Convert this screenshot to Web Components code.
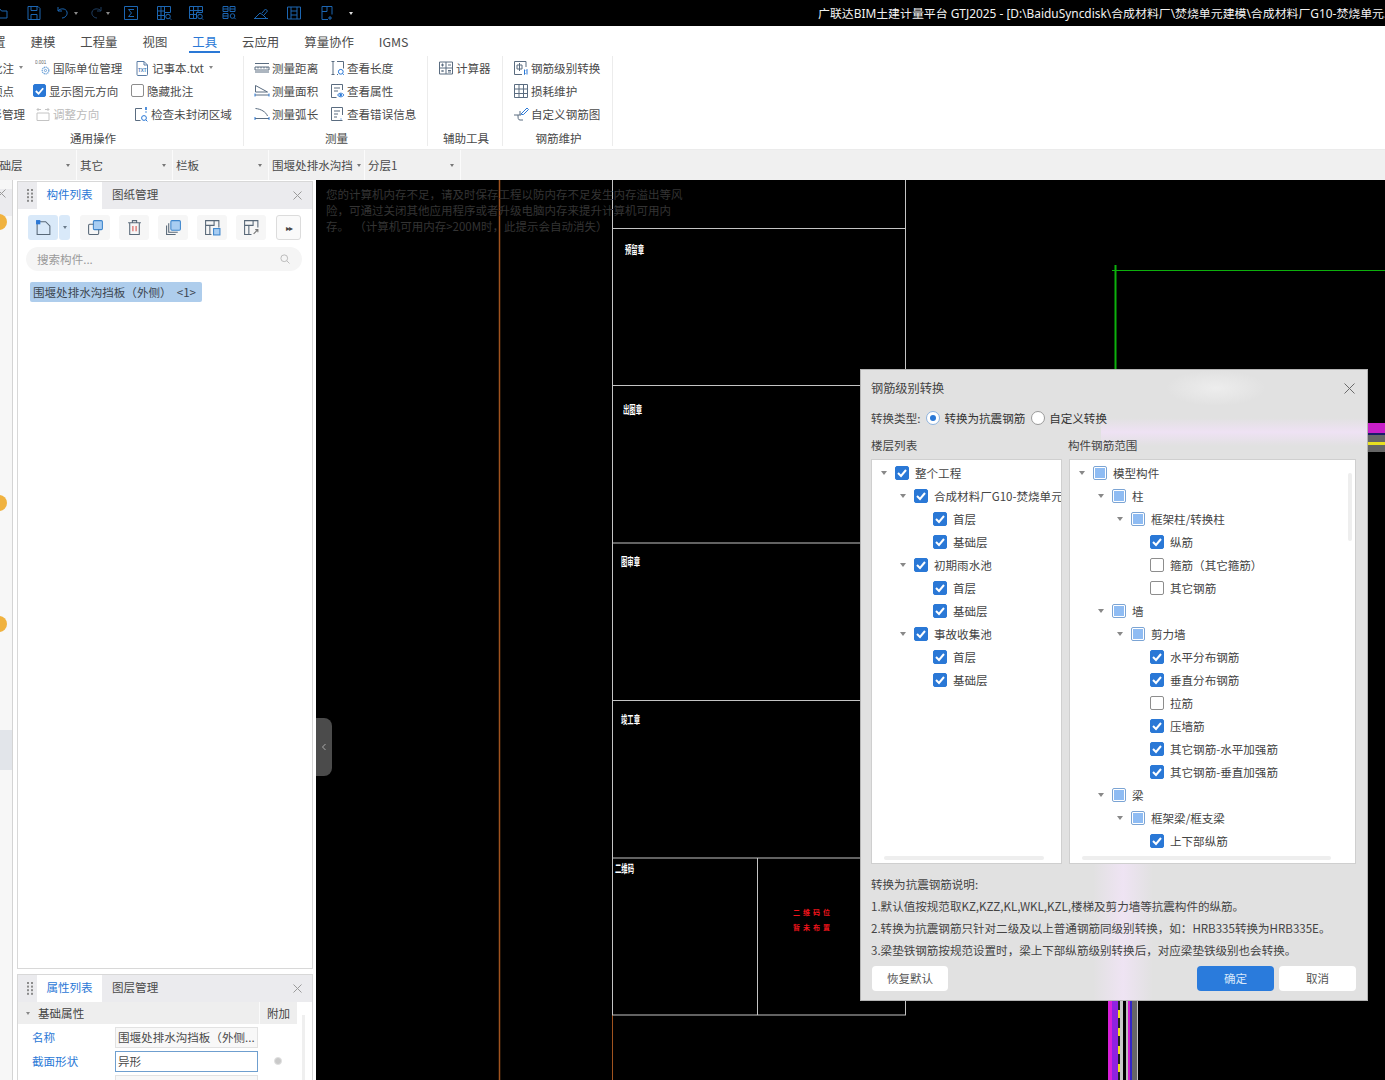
<!DOCTYPE html>
<html lang="zh">
<head>
<meta charset="utf-8">
<title>GTJ2025</title>
<style>
  html, body { margin: 0; height: 100%; overflow: hidden; background: #fff; }
  body {
    width: 1385px; height: 1080px;
    display: flex; flex-direction: column;
    font: 11.55px/16px "Noto Sans CJK SC", "Noto Sans", sans-serif;
    color: #444;
  }
</style>
</head>
<body>
<title-bar>广联达BIM土建计量平台 GTJ2025 - [D:\BaiduSyncdisk\合成材料厂\焚烧单元建模\合成材料厂G10-焚烧单元.GTJ]</title-bar>
<menu-bar></menu-bar>
<ribbon-bar></ribbon-bar>
<selector-bar></selector-bar>
<main-area></main-area>

<script>
const ICONS = {
  folder: '<path d="M1 4h5l1.500 2H13v7H1zM3 6l-2 7"/>',
  save: '<path d="M2 1.500h10l2 2v11H2zM5 1.500v4h6v-4M5 14.500v-5h6v5"/>',
  undo: '<path d="M3 2v4h4M3 6c2-3 8-3 9 1 .8 3-2 6-5 6"/>',
  redo: '<path d="M13 2v4H9M13 6c-2-3-8-3-9 1-.8 3 2 6 5 6"/>',
  sigma: '<path d="M1.500 1.500h13v13h-13zM11 4.500H5.500L8.500 8l-3 3.500H11"/>',
  cells: '<path d="M1.500 1.500h13v6h-6v7h-7zM1.500 6h7M5 1.500v13M8.500 1.500v6M1.500 10.500h7"/><circle cx="12" cy="11.500" r="2.300"/><path d="M13.700 13.200l1.500 1.500"/>',
  grid: '<path d="M1.500 1.500h13v6h-6v6h-7zM1.500 5.500h13M5.500 1.500v12M10 1.500v6M1.500 9.500h7"/><circle cx="12" cy="11.500" r="2.300"/><path d="M13.700 13.200l1.500 1.500"/>',
  blocks: '<path d="M2 1.500h5v5H2zM9 1.500h5v5H9zM2 8.500h5v5H2zM2 4h5M9 4h5M2 11h5"/><circle cx="11.500" cy="11" r="2.300"/><path d="M13.200 12.700l1.500 1.500"/>',
  pen: '<path d="M1 13.500h14M2 13l5-5 3 2 3 3M9 8l3.500-4 2 2-3.500 4"/>',
  film: '<path d="M1.500 2v12M14.500 2v12M5 2v12M11 2v12M1.500 2h13M1.500 14h13M5 6h6M5 10h6"/>',
  sheet: '<path d="M3 1.500h10v8M3 1.500v13h6M8 1.500v5H3M11 11v4M9 13h4"/>',
  unit: '<text x="0" y="4" font-size="4.500" font-family="Liberation Sans" fill="#666" stroke="none">0.001</text><circle cx="10.500" cy="10.500" r="3.300" stroke="#6fa3d8" stroke-width="1.300" stroke-dasharray="1.300 .6"/><circle cx="10.500" cy="10.500" r="1.100" stroke="#6fa3d8"/>',
  note: '<path d="M3 1.500h7l3.500 3.500v9.500a1 1 0 0 1-1 1H4a1 1 0 0 1-1-1zM10 1.500V5h3.500" stroke="#5a7ca5"/><text x="4" y="12" font-size="4.500" font-family="Liberation Sans" font-weight="700" fill="#3f78b5" stroke="none">TXT</text>',
  direction: '<path d="M2 7h12v7.500H2z"/><path d="M2 3.500h4M10 3.500h4M12.500 2L14 3.500 12.500 5M3.500 2L2 3.500 3.500 5"/>',
  region: '<path d="M9 2.500H2.500v12h5" /><path d="M13 1v3M13 5.500v1" stroke="#2a78d6" stroke-width="1.600"/><circle cx="11" cy="12" r="2.400" stroke="#2a78d6"/><path d="M12.800 13.800l1.600 1.600" stroke="#2a78d6"/>',
  distance: '<path d="M1 3.500h14M1 12h14M1 7h14v3H1zM4 7v1.500M7 7v1.500M10 7v1.500M13 7v1.500"/>',
  area: '<path d="M1.500 9V2.500l12 6.500h-12M1 12h14" /><path d="M1 10.500v3M15 10.500v3" stroke="#2a78d6"/>',
  arc: '<path d="M1.500 2.500C7 3 12 6 13.500 10M1 12.500h14"/><path d="M1 11v3M15 11v3" stroke="#2a78d6"/>',
  length: '<path d="M2.500 1.500h3M2.500 14.500h3M4 1.500v13M8 1.500h6.500v7M8 14.500h1"/><circle cx="11.800" cy="11.800" r="2.400" stroke="#2a78d6"/><path d="M13.500 13.500l1.300 1.300" stroke="#2a78d6"/>',
  props: '<path d="M13.500 7V1.500h-11v13h5M5 5h6M5 8h4"/><path d="M8.500 12c1.800-2.400 4.700-2.400 6.500 0-1.800 2.400-4.700 2.400-6.500 0z" stroke="#2a78d6"/><circle cx="11.700" cy="12" r=".9" fill="#2a78d6" stroke="#2a78d6"/>',
  errors: '<path d="M13.500 9V1.500h-11v13h11M5 5h6M5 8h4M5 11h3"/><path d="M12 10.500v.1M12 12.500v1" stroke="#2a78d6"/>',
  calc: '<path d="M1.500 2h13v12h-13zM8 2v12M1.500 8h13M3 5h3M4.500 3.500v3M10 5h3M3.500 10l2 2M5.500 10l-2 2M10 10.500h3M10 12h3"/>',
  convert: '<path d="M13 7V1.500H1.500v13H9"/><path d="M4 5h5v4H4zM6.500 3v8" stroke="#5a6c80"/><path d="M11.500 14.500V9.500M14 9.500v5M14 9.500l-1 1M11.500 14.500l1-1" stroke="#2a78d6"/>',
  table: '<path d="M1.500 1.500h13v13h-13zM1.500 6h13M1.500 10.500h13M6 1.500v13M10.500 1.500v13" />',
  custom: '<path d="M1 9h7M5 9c0 3 0 5 2 5h3M7 9V5" /><path d="M8 8l1 -1 5-5 1.500 1.500-5 5-1.500 0z" stroke="#2a78d6"/>',
  newfile: '<path d="M2 2.500h8l4 4v8H2z"/><rect x="1" y="1" width="4" height="4" fill="#2a78d6" stroke="none"/>',
  copy: '<rect x="6" y="1.500" width="8.500" height="8.500" rx="1" fill="#a8cdf2" stroke="#3f86cc"/><path d="M6 5H2.500a1 1 0 0 0-1 1v7.500a1 1 0 0 0 1 1H10a1 1 0 0 0 1-1V10"/>',
  trash: '<path d="M2 3.500h12M6 3.500V1.500h4v2M3.500 3.500v11h9v-11"/><path d="M6.500 6.500v5M9.500 6.500v5" stroke="#d9534f"/>',
  layers: '<rect x="5.500" y="1.500" width="9" height="9" rx="1" fill="#a8cdf2" stroke="#3f86cc"/><path d="M3.500 4v8.500H12M1.500 6v8.500H10"/>',
  saveitem: '<path d="M14 8V1.500H1.500v13H7M1.500 6h8v-4.500M5.500 6v8.500"/><rect x="9" y="9" width="6" height="6" fill="#a8cdf2" stroke="#3f86cc"/>',
  saveout: '<path d="M14 8V1.500H1.500v13H8M1.500 6h8v-4.500M5.500 6v8.500"/><path d="M10 14l4-4M11.500 10H14v2.500" stroke="#777"/>',
  search: '<circle cx="7" cy="7" r="4.500"/><path d="M10.500 10.500l3.500 3.500"/>'
};

// small helper so every element below is just a tag name + shadow markup
function define(tag, html, init) {
  const template = document.createElement('template');
  template.innerHTML = html;
  customElements.define(tag, class extends HTMLElement {
    constructor() {
      super();
      this.attachShadow({ mode: 'open' });
      this.shadowRoot.appendChild(template.content.cloneNode(true));
    }
    connectedCallback() {
      if (init) init(this);
    }
  });
}

define('ui-icon', `
  <style>
    :host { display: inline-flex; flex: none; width: 16px; height: 16px; color: #5a6c80; }
    svg { width: 100%; height: 100%; fill: none; stroke: currentColor; stroke-width: 1; }
  </style>
  <svg viewBox="0 0 16 16"></svg>
`, el => {
  el.shadowRoot.querySelector('svg').innerHTML = ICONS[el.getAttribute('name')] || '';
});

define('ui-check', `
  <style>
    :host {
      display: inline-flex; flex: none; box-sizing: border-box; width: 14px; height: 14px;
      border: 1px solid #8d8d8d; border-radius: 2px; background: #fff;
      align-items: center; justify-content: center;
    }
    :host([state="checked"]) { background: #2a78d6; border-color: #2a78d6; }
    :host([state="mixed"]) { background: #fff; border-color: #7ba4d4; }
    svg { display: none; width: 12px; height: 12px; fill: none; stroke: #fff; stroke-width: 2; }
    :host([state="checked"]) svg { display: block; }
    i { display: none; width: 10px; height: 10px; background: #8fbcf3; }
    :host([state="mixed"]) i { display: block; }
  </style>
  <svg viewBox="0 0 12 12"><path d="M2 6l3 3 5-6"/></svg><i></i>
`);

define('title-bar', `
  <style>
    :host {
      display: flex; flex: none; height: 26px; background: #000; overflow: hidden;
      align-items: center; position: relative; color: #fff;
    }
    ui-icon { color: #1c66b2; position: absolute; top: 5px; }
    .tri { position: absolute; top: 12px; width: 0; height: 0;
      border: 2.500px solid transparent; border-top: 3px solid #8a8a8a; border-bottom: 0; }
    .title {
      margin-left: 818px; white-space: nowrap; font: 11.9px/16px "Noto Sans", "Noto Sans CJK SC", sans-serif; color: #f2f2f2;
    }
  </style>
  <ui-icon name="folder" style="left:-6px"></ui-icon>
  <ui-icon name="save" style="left:26px"></ui-icon>
  <ui-icon name="undo" style="left:55px"></ui-icon><span class="tri" style="left:74px"></span>
  <ui-icon name="redo" style="left:88px;color:#1f3f63"></ui-icon><span class="tri" style="left:106px"></span>
  <ui-icon name="sigma" style="left:123px"></ui-icon>
  <ui-icon name="cells" style="left:156px"></ui-icon>
  <ui-icon name="grid" style="left:188px"></ui-icon>
  <ui-icon name="blocks" style="left:221px"></ui-icon>
  <ui-icon name="pen" style="left:253px"></ui-icon>
  <ui-icon name="film" style="left:286px"></ui-icon>
  <ui-icon name="sheet" style="left:319px"></ui-icon>
  <span class="tri" style="left:349px;border-top-color:#ddd"></span>
  <span class="title"><slot></slot></span>
`);

define('menu-bar', `
  <style>
    :host {
      display: flex; flex: none; height: 28px; box-sizing: border-box; background: #fff; gap: 25px; overflow: hidden;
      padding-top: 2px; font-size: 12.4px; line-height: 28px; color: #4c4c4c;
    }
    span { position: relative; flex: none; height: 26px; }
    span:first-of-type { margin-left: -44px; }
    .on { color: #2a78d6; }
    .on::after {
      content: ""; position: absolute; left: -3px; right: -3px; bottom: 1px;
      height: 2px; background: #2a78d6;
    }
  </style>
  <span>工程设置</span><span>建模</span><span>工程量</span><span>视图</span>
  <span class="on">工具</span><span>云应用</span><span>算量协作</span><span>IGMS</span>
`);

define('ribbon-item', `
  <style>
    :host {
      display: flex; align-items: center; height: 23px; gap: 2px; white-space: nowrap;
      color: #4a4a4a;
    }
    :host([disabled]) { color: #bbb; }
    .arrow { width: 0; height: 0; margin-left: 3px; border: 2.500px solid transparent;
      border-top: 3px solid #888; border-bottom: 0; }
    :host(:not([drop])) .arrow { display: none; }
  </style>
  <slot name="lead"></slot><slot></slot><span class="arrow"></span>
`);

define('ribbon-group', `
  <style>
    :host {
      display: flex; flex-direction: column; flex: none; box-sizing: border-box;
      height: 90px; margin-top: 2px;
      border-right: 1px solid #ececec; overflow: hidden;
    }
    .cols { display: flex; height: 69px; }
    .name { height: 21px; line-height: 26px; text-align: center; color: #4a4a4a; white-space: nowrap; margin-left: var(--name-left, 0); padding-right: var(--name-right, 0); }
  </style>
  <div class="cols"><slot></slot></div>
  <div class="name"></div>
`, el => {
  el.shadowRoot.querySelector('.name').textContent = el.getAttribute('name');
});

define('ribbon-bar', `
  <style>
    :host {
      display: flex; flex: none; height: 96px; background: #fff; overflow: hidden;
      box-sizing: border-box; border-bottom: 1px solid #ebebeb;
    }
    .col { display: flex; flex-direction: column; flex: none; }
    ui-icon[name="direction"] { color: #c4c4c4; }
    ui-check { width: 13px; height: 13px; margin-right: 1px; }
  </style>
  <ribbon-group name="通用操作" style="width:244px;--name-right:57px">
    <div class="col" style="width:33px;align-items:flex-end">
      <ribbon-item drop style="padding-right:10px">批注</ribbon-item>
      <ribbon-item style="padding-right:19px">顶点</ribbon-item>
      <ribbon-item style="padding-right:8px">图形管理</ribbon-item>
    </div>
    <div class="col" style="width:98px">
      <ribbon-item style="padding-left:2px"><ui-icon slot="lead" name="unit"></ui-icon>国际单位管理</ribbon-item>
      <ribbon-item><ui-check slot="lead" state="checked"></ui-check>显示图元方向</ribbon-item>
      <ribbon-item disabled style="padding-left:2px"><ui-icon slot="lead" name="direction"></ui-icon>调整方向</ribbon-item>
    </div>
    <div class="col">
      <ribbon-item drop style="padding-left:3px"><ui-icon slot="lead" name="note"></ui-icon>记事本.txt</ribbon-item>
      <ribbon-item><ui-check slot="lead"></ui-check>隐藏批注</ribbon-item>
      <ribbon-item style="padding-left:2px"><ui-icon slot="lead" name="region"></ui-icon>检查未封闭区域</ribbon-item>
    </div>
  </ribbon-group>
  <ribbon-group name="测量" style="width:184px;padding-left:10px;--name-left:-8px">
    <div class="col" style="width:75px">
      <ribbon-item><ui-icon slot="lead" name="distance"></ui-icon>测量距离</ribbon-item>
      <ribbon-item><ui-icon slot="lead" name="area"></ui-icon>测量面积</ribbon-item>
      <ribbon-item><ui-icon slot="lead" name="arc"></ui-icon>测量弧长</ribbon-item>
    </div>
    <div class="col">
      <ribbon-item><ui-icon slot="lead" name="length"></ui-icon>查看长度</ribbon-item>
      <ribbon-item><ui-icon slot="lead" name="props"></ui-icon>查看属性</ribbon-item>
      <ribbon-item><ui-icon slot="lead" name="errors"></ui-icon>查看错误信息</ribbon-item>
    </div>
  </ribbon-group>
  <ribbon-group name="辅助工具" style="width:75px;padding-left:10px;--name-left:-8px">
    <div class="col">
      <ribbon-item><ui-icon slot="lead" name="calc"></ui-icon>计算器</ribbon-item>
    </div>
  </ribbon-group>
  <ribbon-group name="钢筋维护" style="width:110px;padding-left:10px;--name-left:-8px">
    <div class="col">
      <ribbon-item><ui-icon slot="lead" name="convert"></ui-icon>钢筋级别转换</ribbon-item>
      <ribbon-item><ui-icon slot="lead" name="table"></ui-icon>损耗维护</ribbon-item>
      <ribbon-item><ui-icon slot="lead" name="custom"></ui-icon>自定义钢筋图</ribbon-item>
    </div>
  </ribbon-group>
`);

define('selector-cell', `
  <style>
    :host {
      display: flex; flex: none; box-sizing: border-box; width: 96px; height: 30px;
      align-items: center; justify-content: space-between; padding: 0 6px 0 3px;
      border-right: 1px solid #fbfbfb; white-space: nowrap; color: #4a4a4a;
    }
    i { flex: none; width: 0; height: 0; border: 2.500px solid transparent;
      border-top: 3px solid #777; border-bottom: 0; }
  </style>
  <span><slot></slot></span><i></i>
`);

define('selector-bar', `
  <style>
    :host { display: flex; flex: none; height: 30px; background: #f0f0f0; overflow: hidden; }
  </style>
  <selector-cell style="width:92px;margin-left:-15px">基础层</selector-cell>
  <selector-cell>其它</selector-cell>
  <selector-cell>栏板</selector-cell>
  <selector-cell style="padding-right:3px">围堰处排水沟挡</selector-cell>
  <selector-cell>分层1</selector-cell>
`);

define('panel-tabs', `
  <style>
    :host {
      display: flex; flex: none; height: 27px; background: #ebebee; position: relative;
      line-height: 25px; color: #4a4a4a;
    }
    .grip { width: 19px; flex: none; box-sizing: border-box; padding-left: 5px; display: flex; align-items: center; justify-content: center; }
    .grip svg { width: 6px; height: 13px; fill: #8b8b8b; }
    .on { width: 65px; text-align: center; background: #fff; color: #2a78d6; flex: none; }
    .off { margin-left: 10px; }
    .x { margin-left: auto; width: 30px; display: flex; align-items: center; justify-content: center; }
    .x svg { width: 9px; height: 9px; stroke: #9a9a9a; fill: none; }
  </style>
  <div class="grip"><svg viewBox="0 0 6 13"><rect width="2" height="2"/><rect x="4" width="2" height="2"/><rect y="3.600" width="2" height="2"/><rect x="4" y="3.600" width="2" height="2"/><rect y="7.200" width="2" height="2"/><rect x="4" y="7.200" width="2" height="2"/><rect y="10.800" width="2" height="2"/><rect x="4" y="10.800" width="2" height="2"/></svg></div>
  <div class="on"><slot name="active"></slot></div>
  <div class="off"><slot name="other"></slot></div>
  <div class="x"><svg viewBox="0 0 9 9"><path d="M.5.5l8 8M8.500.5l-8 8"/></svg></div>
`);

define('tool-btn', `
  <style>
    :host {
      display: flex; flex: none; box-sizing: border-box; width: 30px; height: 25px;
      background: #f6f6f6; border-radius: 3px; align-items: center; justify-content: center;
    }
  </style>
  <slot></slot>
`);

define('list-panel', `
  <style>
    :host {
      display: flex; flex-direction: column; flex: 1; min-height: 0; box-sizing: border-box;
      border: 1px solid #d8d8d8; background: #fff;
    }
    .tools { display: flex; gap: 9px; padding: 6px 0 0 10px; }
    .split { display: flex; gap: 1px; margin-right: 1px; }
    .split tool-btn { background: #d9e9f9; }
    .caret { width: 11px; }
    .caret i { width: 0; height: 0; border: 2.500px solid transparent; border-top: 3px solid #6a7a8a; border-bottom: 0; }
    .more { width: 25px; margin-left: 1px; background: #fafafa; border: 1px solid #dcdcdc; font-size: 8px; color: #444; letter-spacing: -1px; }
    tool-btn ui-icon { color: #586878; width: 17px; height: 17px; }
    .search {
      display: flex; align-items: center; justify-content: space-between; box-sizing: border-box;
      margin: 7px 10px 0 8px; height: 24px; padding: 0 11px; border-radius: 12px;
      background: #f5f5f5; color: #9a9a9a;
    }
    .search ui-icon { width: 12px; height: 12px; color: #aaa; }
    .item {
      align-self: flex-start; margin: 11px 0 0 12px; height: 20px; line-height: 20px;
      padding: 0 3px; width: 172px; box-sizing: border-box; border-radius: 2px;
      background: #aecdec; color: #3c4650; white-space: pre;
    }
  </style>
  <panel-tabs><span slot="active">构件列表</span><span slot="other">图纸管理</span></panel-tabs>
  <div class="tools">
    <div class="split">
      <tool-btn><ui-icon name="newfile"></ui-icon></tool-btn>
      <tool-btn class="caret"><i></i></tool-btn>
    </div>
    <tool-btn><ui-icon name="copy"></ui-icon></tool-btn>
    <tool-btn><ui-icon name="trash"></ui-icon></tool-btn>
    <tool-btn><ui-icon name="layers"></ui-icon></tool-btn>
    <tool-btn><ui-icon name="saveitem"></ui-icon></tool-btn>
    <tool-btn><ui-icon name="saveout"></ui-icon></tool-btn>
    <tool-btn class="more">▸▸</tool-btn>
  </div>
  <div class="search"><span>搜索构件...</span><ui-icon name="search"></ui-icon></div>
  <div class="item">围堰处排水沟挡板（外侧）  &lt;1&gt;</div>
`);

define('prop-row', `
  <style>
    :host { display: flex; align-items: center; height: 24px; padding-left: 14px; flex: none; }
    .k { width: 83px; color: #2a78d6; flex: none; }
    .v {
      box-sizing: border-box; width: 143px; height: 21px; line-height: 19px; padding: 0 2px;
      border: 1px solid #e2e2e2; background: #f8f8f8; color: #4a4a4a;
      white-space: nowrap; overflow: hidden; flex: none;
    }
    :host([focused]) .v { background: #fff; border-color: #6f9fcf; }
    .dot { width: 8px; height: 8px; margin-left: 16px; border-radius: 50%; background: #c9c9c9; border: 1px solid #e0e0e0; box-sizing: border-box; display: none; }
    :host([focused]) .dot { display: block; }
  </style>
  <span class="k"><slot name="k"></slot></span>
  <span class="v"><slot></slot></span><i class="dot"></i>
`);

define('prop-panel', `
  <style>
    :host {
      display: flex; flex-direction: column; flex: none; height: 106px; box-sizing: border-box;
      border: 1px solid #d8d8d8; border-bottom: 0; background: #fff; overflow: hidden; position: relative;
    }
    .head {
      display: flex; flex: none; height: 22px; width: 279px; line-height: 22px; background: #eeeeee;
      margin-bottom: 1px;
    }
    .head .t { flex: 1; padding-left: 8px; display: flex; align-items: center; gap: 8px; }
    .head i { width: 0; height: 0; border: 2.500px solid transparent; border-top: 3px solid #888; border-bottom: 0; }
    .head .e { width: 37px; text-align: center; border-left: 1px solid #fafafa; }
    .bar { position: absolute; right: 7px; top: 40px; bottom: 0; width: 3px; background: #efefef; }
  </style>
  <panel-tabs><span slot="active">属性列表</span><span slot="other">图层管理</span></panel-tabs>
  <div class="head"><span class="t"><i></i>基础属性</span><span class="e">附加</span></div>
  <prop-row><span slot="k">名称</span>围堰处排水沟挡板（外侧...</prop-row>
  <prop-row focused><span slot="k">截面形状</span>异形</prop-row>
  <prop-row></prop-row>
  <div class="bar"></div>
`);

define('left-rail', `
  <style>
    :host {
      display: block; flex: none; width: 13px; box-sizing: border-box; position: relative;
      background: #f7f7f7; border-right: 1px solid #d4d4d4; overflow: hidden;
    }
    .cap { height: 27px; margin-top: 1px; background: #ebebee; }
    .cap svg { width: 9px; height: 9px; margin: 9px 0 0 -3px; stroke: #9a9a9a; fill: none; display: block; }
    .pick { position: absolute; left: 0; right: 0; top: 550px; height: 40px; background: #e2e5ea; }
    .dot { position: absolute; left: -9px; width: 16px; height: 16px; border-radius: 50%; background: #f0b23f; }
  </style>
  <div class="cap"><svg viewBox="0 0 9 9"><path d="M.5.5l8 8M8.500.5l-8 8"/></svg></div>
  <i class="dot" style="top:34px"></i>
  <i class="dot" style="top:315px"></i>
  <i class="dot" style="top:436px"></i>
  <div class="pick"></div>
`);

define('tree-row', `
  <style>
    :host { display: flex; align-items: center; height: 23px; white-space: nowrap; flex: none; color: #444; }
    .a { width: 14px; flex: none; }
    .a i { display: block; width: 0; height: 0; border: 3px solid transparent; border-top: 4px solid #888; border-bottom: 0; margin-top: 1px; }
    :host([leaf]) .a i { display: none; }
    .t { margin-left: 6px; }
  </style>
  <span class="a"><i></i></span><ui-check></ui-check><span class="t"><slot></slot></span>
`, el => {
  const level = +el.getAttribute('level') || 0;
  el.style.paddingLeft = (9 + level * 19) + 'px';
  const state = el.getAttribute('state');
  if (state) el.shadowRoot.querySelector('ui-check').setAttribute('state', state);
});

define('tree-box', `
  <style>
    :host {
      display: block; flex: none; box-sizing: border-box; height: 405px; padding-top: 1px;
      background: #fff; border: 1px solid #cfcfcf; overflow: hidden; position: relative;
    }
    .h { position: absolute; bottom: 3px; height: 4px; background: #eeeeee; border-radius: 2px; left: var(--bar-l); right: var(--bar-r); }
  </style>
  <slot></slot><div class="h"></div>
`);

define('ui-radio', `
  <style>
    :host {
      display: inline-flex; flex: none; box-sizing: border-box; width: 14px; height: 14px; border-radius: 50%;
      background: #fff; border: 1px solid #9a9a9a; align-items: center; justify-content: center;
    }
    i { display: none; width: 6px; height: 6px; border-radius: 50%; background: #2a78d6; }
    :host([on]) { border-color: #8db3df; }
    :host([on]) i { display: block; }
  </style>
  <i></i>
`);

define('ui-button', `
  <style>
    :host {
      display: block; flex: none; box-sizing: border-box; width: 77px; height: 25px; line-height: 25px;
      text-align: center; background: #fff; border-radius: 4px; color: #555;
    }
    :host([primary]) { background: #2a7bdc; color: #d8e8fa; }
  </style>
  <slot></slot>
`);

define('rebar-dialog', `
  <style>
    :host {
      position: absolute; left: 544px; top: 189px; width: 508px; height: 632px; box-sizing: border-box;
      display: flex; flex-direction: column; padding: 0 11px 0 10px;
      border: 1px solid #b4b4b4; color: #444;
      background:
        linear-gradient(90deg, rgba(240,228,245,0), rgba(240,228,245,.9) 50%, rgba(240,228,245,0)) 232px 492px / 60px 140px no-repeat,
        linear-gradient(180deg, rgba(240,226,246,0), rgba(240,226,246,.9) 50%, rgba(240,226,246,0)) 240px 48px / 268px 28px no-repeat,
        radial-gradient(ellipse 50px 18px at 355px 18px, rgba(240,240,240,.8), rgba(240,240,240,0)),
        #e1e1e1;
    }
    .title { display: flex; align-items: center; justify-content: space-between; height: 36px; flex: none; font-size: 12.2px; }
    .title svg { width: 11px; height: 11px; margin-right: 1px; stroke: #6a6a6a; fill: none; }
    .type { display: flex; align-items: center; height: 24px; flex: none; }
    .type ui-radio { margin: 0 4px 0 6px; }
    .heads { display: flex; height: 29px; align-items: center; flex: none; padding-top: 0; }
    .heads span:first-child { width: 197px; flex: none; }
    .boxes { display: flex; gap: 7px; flex: none; margin-top: 0; }
    .notes { flex: none; margin-top: 9px; }
    .notes div { height: 22px; line-height: 22px; white-space: nowrap; }
    .foot { display: flex; gap: 5px; margin-top: 5px; flex: none; }
    .foot ui-button:first-child { width: 76px; margin-left: 1px; margin-right: auto; }
    .lbox { width: 191px; --bar-l: 12px; --bar-r: 17px; }
    .rbox { width: 287px; --bar-l: 12px; --bar-r: 24px; }
    .v { position: absolute; left: 487px; top: 103px; width: 4px; height: 68px; background: #eeeeee; border-radius: 2px; }
  </style>
  <div class="title"><span>钢筋级别转换</span><svg viewBox="0 0 11 11"><path d="M.5.5l10 10M10.500.5l-10 10"/></svg></div>
  <div class="type">
    <span>转换类型:</span>
    <ui-radio on></ui-radio><span style="color:#333">转换为抗震钢筋</span>
    <ui-radio></ui-radio><span style="color:#333">自定义转换</span>
  </div>
  <div class="heads"><span>楼层列表</span><span>构件钢筋范围</span></div>
  <div class="boxes">
    <tree-box class="lbox">
      <tree-row level="0" state="checked">整个工程</tree-row>
      <tree-row level="1" state="checked">合成材料厂G10-焚烧单元</tree-row>
      <tree-row level="2" leaf state="checked">首层</tree-row>
      <tree-row level="2" leaf state="checked">基础层</tree-row>
      <tree-row level="1" state="checked">初期雨水池</tree-row>
      <tree-row level="2" leaf state="checked">首层</tree-row>
      <tree-row level="2" leaf state="checked">基础层</tree-row>
      <tree-row level="1" state="checked">事故收集池</tree-row>
      <tree-row level="2" leaf state="checked">首层</tree-row>
      <tree-row level="2" leaf state="checked">基础层</tree-row>
    </tree-box>
    <tree-box class="rbox">
      <tree-row level="0" state="mixed">模型构件</tree-row>
      <tree-row level="1" state="mixed">柱</tree-row>
      <tree-row level="2" state="mixed">框架柱/转换柱</tree-row>
      <tree-row level="3" leaf state="checked">纵筋</tree-row>
      <tree-row level="3" leaf>箍筋（其它箍筋）</tree-row>
      <tree-row level="3" leaf>其它钢筋</tree-row>
      <tree-row level="1" state="mixed">墙</tree-row>
      <tree-row level="2" state="mixed">剪力墙</tree-row>
      <tree-row level="3" leaf state="checked">水平分布钢筋</tree-row>
      <tree-row level="3" leaf state="checked">垂直分布钢筋</tree-row>
      <tree-row level="3" leaf>拉筋</tree-row>
      <tree-row level="3" leaf state="checked">压墙筋</tree-row>
      <tree-row level="3" leaf state="checked">其它钢筋-水平加强筋</tree-row>
      <tree-row level="3" leaf state="checked">其它钢筋-垂直加强筋</tree-row>
      <tree-row level="1" state="mixed">梁</tree-row>
      <tree-row level="2" state="mixed">框架梁/框支梁</tree-row>
      <tree-row level="3" leaf state="checked">上下部纵筋</tree-row>
    </tree-box>
  </div>
  <div class="v"></div>
  <div class="notes">
    <div>转换为抗震钢筋说明:</div>
    <div>1.默认值按规范取KZ,KZZ,KL,WKL,KZL,楼梯及剪力墙等抗震构件的纵筋。</div>
    <div>2.转换为抗震钢筋只针对二级及以上普通钢筋同级别转换，如：HRB335转换为HRB335E。</div>
    <div>3.梁垫铁钢筋按规范设置时，梁上下部纵筋级别转换后，对应梁垫铁级别也会转换。</div>
  </div>
  <div class="foot">
    <ui-button>恢复默认</ui-button>
    <ui-button primary>确定</ui-button>
    <ui-button>取消</ui-button>
  </div>
`);

define('cad-canvas', `
  <style>
    :host { display: block; flex: 1; min-width: 0; position: relative; background: #000; overflow: hidden; }
    svg { position: absolute; left: 0; top: 0; width: 1069px; height: 900px; }
    svg text { font-family: "Noto Sans CJK SC", sans-serif; font-weight: 700; }
    .msg { position: absolute; left: 10px; top: 6px; color: #343434; white-space: nowrap; line-height: 16px; font-size: 11.5px; }
    .grab {
      position: absolute; left: 0; top: 538px; width: 16px; height: 58px; background: #4b4b4b;
      border-radius: 0 8px 8px 0; display: flex; align-items: center; justify-content: center;
    }
    .grab svg { position: static; width: 6px; height: 8px; stroke: #aaa; fill: none; }
  </style>
  <svg viewBox="0 0 1069 900">
    <path d="M183.500 0V900" stroke="#a0531f" stroke-width="1.500"/>
    <path d="M296.500 835V900" stroke="#a0531f"/>
    <g stroke="#c4c4c4" fill="none">
      <path d="M296.500 0V835M589.500 0V835M441.500 678V835"/>
      <path d="M296 48.500H589M296 205.500H589M296 363H589M296 520.500H589M296 678H589M296 835H590"/>
    </g>
    <g stroke="#0cb00c" fill="none">
      <path d="M799.500 85V200" stroke-width="2"/>
      <path d="M796 90.500H1069"/>
    </g>
    <g fill="#fff" font-size="11">
      <text x="309" y="74" textLength="19" lengthAdjust="spacingAndGlyphs">预留章</text>
      <text x="307" y="234" textLength="19" lengthAdjust="spacingAndGlyphs">出图章</text>
      <text x="305" y="386" textLength="19" lengthAdjust="spacingAndGlyphs">图审章</text>
      <text x="305" y="544" textLength="19" lengthAdjust="spacingAndGlyphs">竣工章</text>
      <text x="299" y="693" textLength="19" lengthAdjust="spacingAndGlyphs">二维码</text>
    </g>
    <g fill="#ee141c" font-size="7">
      <text x="477" y="735" letter-spacing="3">二维码位</text>
      <text x="477" y="750" letter-spacing="3">暂未布置</text>
    </g>
    <!-- purple wall running behind the dialog -->
    <g>
      <rect x="792" y="800" width="4" height="100" fill="#d81fd8"/>
      <rect x="796" y="800" width="6" height="100" fill="#8f22e0"/>
      <rect x="802" y="800" width="2" height="100" fill="#222"/>
      <path d="M803 830v8M803 848v8M803 866v8M803 884v8" stroke="#f2e01a" stroke-width="2"/>
      <rect x="804" y="800" width="3" height="100" fill="#c9c9c9"/>
      <rect x="807" y="800" width="3" height="100" fill="#000"/>
      <rect x="810" y="800" width="2" height="100" fill="#bbb"/>
      <rect x="812" y="800" width="2" height="100" fill="#d01fd0"/>
      <rect x="814" y="800" width="2" height="100" fill="#3226c8"/>
      <rect x="816" y="800" width="5" height="100" fill="#666"/>
      <rect x="821" y="800" width="1" height="100" fill="#c4c4c4"/>
    </g>
    <g>
      <rect x="1040" y="243" width="29" height="10" fill="#c81fc8"/>
      <rect x="1040" y="253" width="29" height="2" fill="#1a1a6a"/>
      <rect x="1040" y="255" width="29" height="7" fill="#666"/>
      <rect x="1040" y="262" width="29" height="3" fill="#e8e020"/>
      <rect x="1040" y="265" width="29" height="7" fill="#666"/>
    </g>
  </svg>
  <div class="msg">您的计算机内存不足，请及时保存工程以防内存不足发生内存溢出等风<br>险，可通过关闭其他应用程序或者升级电脑内存来提升计算机可用内<br>存。&nbsp;&nbsp;（计算机可用内存&gt;200M时，此提示会自动消失）</div>
  <div class="grab"><svg viewBox="0 0 6 8"><path d="M4.500 1L1.500 4l3 3"/></svg></div>
  <rebar-dialog></rebar-dialog>
`);

define('main-area', `
  <style>
    :host { display: flex; flex: 1; min-height: 0; background: #f4f4f4; }
    .side {
      display: flex; flex-direction: column; flex: none; box-sizing: border-box; width: 303px;
      padding: 1px 3px 0 4px; gap: 5px; background: #fff;
    }
  </style>
  <left-rail></left-rail>
  <div class="side">
    <list-panel></list-panel>
    <prop-panel></prop-panel>
  </div>
  <cad-canvas></cad-canvas>
`);
</script>
</body>
</html>
